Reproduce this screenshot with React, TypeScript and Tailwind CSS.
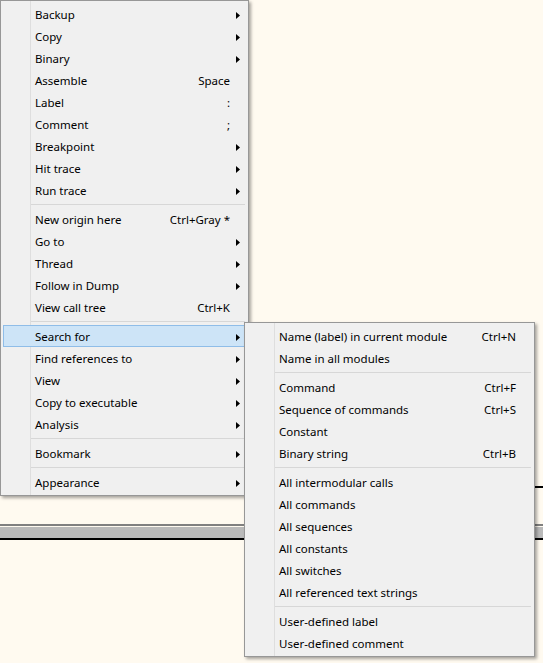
import React from 'react';

type Entry = { label: string; shortcut?: string; sub?: boolean; active?: boolean } | 'sep';

const mainMenu: Entry[] = [
  { label: 'Backup', sub: true },
  { label: 'Copy', sub: true },
  { label: 'Binary', sub: true },
  { label: 'Assemble', shortcut: 'Space' },
  { label: 'Label', shortcut: ':' },
  { label: 'Comment', shortcut: ';' },
  { label: 'Breakpoint', sub: true },
  { label: 'Hit trace', sub: true },
  { label: 'Run trace', sub: true },
  'sep',
  { label: 'New origin here', shortcut: 'Ctrl+Gray *' },
  { label: 'Go to', sub: true },
  { label: 'Thread', sub: true },
  { label: 'Follow in Dump', sub: true },
  { label: 'View call tree', shortcut: 'Ctrl+K' },
  'sep',
  { label: 'Search for', sub: true, active: true },
  { label: 'Find references to', sub: true },
  { label: 'View', sub: true },
  { label: 'Copy to executable', sub: true },
  { label: 'Analysis', sub: true },
  'sep',
  { label: 'Bookmark', sub: true },
  'sep',
  { label: 'Appearance', sub: true },
];

const searchMenu: Entry[] = [
  { label: 'Name (label) in current module', shortcut: 'Ctrl+N' },
  { label: 'Name in all modules' },
  'sep',
  { label: 'Command', shortcut: 'Ctrl+F' },
  { label: 'Sequence of commands', shortcut: 'Ctrl+S' },
  { label: 'Constant' },
  { label: 'Binary string', shortcut: 'Ctrl+B' },
  'sep',
  { label: 'All intermodular calls' },
  { label: 'All commands' },
  { label: 'All sequences' },
  { label: 'All constants' },
  { label: 'All switches' },
  { label: 'All referenced text strings' },
  'sep',
  { label: 'User-defined label' },
  { label: 'User-defined comment' },
];

const Arrow = () => (
  <svg width="4" height="7" viewBox="0 0 4 7" className="block">
    <path d="M0 0 L4 3.5 L0 7 Z" fill="#000" />
  </svg>
);

const Menu: React.FC<{ items: Entry[]; className: string }> = ({ items, className }) => (
  <div
    className={`absolute flex flex-col border border-[#979797] bg-[linear-gradient(90deg,#f0f0f0_29px,#dedede_29px,#dedede_30px,#f0f0f0_30px)] py-[2px] pl-[2px] pr-[3px] shadow-[2px_2px_3px_rgba(0,0,0,0.35)] ${className}`}
  >
    {items.map((it, i) =>
      it === 'sep' ? (
        <div key={i} className="flex h-[7px] items-center pl-[28px]">
          <div className="h-px w-full bg-[#d7d7d7]" />
        </div>
      ) : (
        <div
          key={i}
          className={`flex h-[22px] items-center pt-[2px] text-[11.5px] leading-none text-black ${
            it.active ? 'border border-[#8fbde8] bg-[#cde4f7] pl-[31px]' : 'pl-[32px]'
          }`}
        >
          <span className="flex-1 whitespace-nowrap">{it.label}</span>
          {it.shortcut && <span className="whitespace-nowrap">{it.shortcut}</span>}
          <span className={`flex items-center pl-[6px] ${it.active ? 'w-[14px]' : 'w-[15px]'}`}>{it.sub && <Arrow />}</span>
        </div>
      )
    )}
  </div>
);

export default function App() {
  return (
    <div
      className="relative h-[663px] w-[543px] overflow-hidden bg-[#fffaf0]"
      style={{ fontFamily: '"Noto Sans", "Open Sans", sans-serif' }}
    >
      {/* window content behind the popup */}
      <div className="flex flex-col">
        <div className="h-[486px]" />
        <div className="h-[2px] bg-black" />
        <div className="h-[36px]" />
        <div className="h-[2px] bg-[#808080]" />
        <div className="h-px bg-[#fffaf0]" />
        <div className="h-[11px] bg-[#bababa]" />
        <div className="h-[2px] bg-black" />
      </div>

      <Menu items={mainMenu} className="left-0 top-0 w-[249px]" />
      <Menu items={searchMenu} className="left-[244px] top-[322px] w-[291px]" />
    </div>
  );
}
